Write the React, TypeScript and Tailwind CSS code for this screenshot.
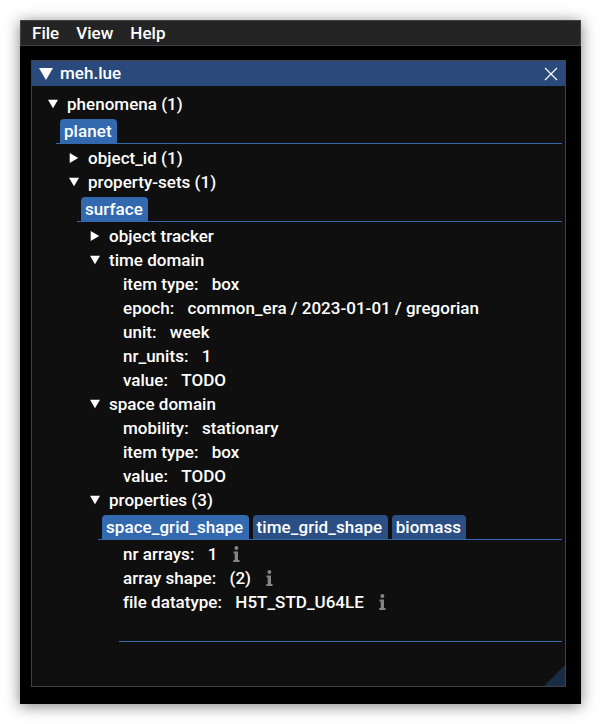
import type { ReactNode } from "react";

function Arrow({ open }: { open: boolean }) {
  return (
    <svg width="12" height="12" viewBox="0 0 12 12" className="shrink-0" fill="#fff">
      {open ? <path d="M1 1.7H11L6 10.2Z" /> : <path d="M1.7 1V11L10.2 6Z" />}
    </svg>
  );
}

function Node({ open = true, label }: { open?: boolean; label: string }) {
  return (
    <div className="flex h-6 items-center gap-2">
      <Arrow open={open} />
      <span>{label}</span>
    </div>
  );
}

function Tabs({ names }: { names: string[] }) {
  return (
    <div className="mt-[3px] mb-[2px] flex h-[25px] gap-1 border-b border-[#3368ad] pl-1 tracking-[0.06px]">
      {names.map((name, i) => (
        <div
          key={name}
          className={`h-6 rounded-t pr-[5.4px] pl-1 leading-[25px] ${i === 0 ? "bg-[#3369ae]" : "bg-[#2b4f84]"}`}
        >
          {name}
        </div>
      ))}
    </div>
  );
}

function InfoIcon() {
  return (
    <svg width="7" height="16" viewBox="0 0 7 16" fill="#858585" className="ml-[2px]">
      <circle cx="3.4" cy="2" r="2" />
      <path d="M0.5 5.5H5V14H6.5V16H0.3V14H1.7V7.5H0.5Z" />
    </svg>
  );
}

function Field({ name, value, info = false }: { name: string; value: string; info?: boolean }) {
  return (
    <div className="flex h-6 items-center gap-[13.3px]">
      <span>{name}:</span>
      <span>{value}</span>
      {info && <InfoIcon />}
    </div>
  );
}

function Indent({ children }: { children: ReactNode }) {
  return <div className="pl-[21px]">{children}</div>;
}

export default function App() {
  return (
    <div className="h-[724px] w-[601px] overflow-hidden bg-white pt-5 pl-5 font-['Roboto',sans-serif] text-[17px] leading-6 font-medium tracking-[0.02px] whitespace-pre text-white">
      <div className="h-[684px] w-[561px] bg-black shadow-[0_2px_14px_rgba(0,0,0,0.5)]">
        <nav className="flex h-[26px] items-center gap-[17px] border border-[#414147] bg-[#242424] pl-[11px]">
          <span>File</span>
          <span>View</span>
          <span>Help</span>
        </nav>
        <section className="mt-[14px] ml-[11px] flex h-[627px] w-[535px] flex-col border border-[#414147] bg-[#0f0f0f]">
          <header className="flex h-[25px] shrink-0 items-center bg-[#294a7a] pr-[7px] pl-[7px]">
            <svg width="14" height="12" viewBox="0 0 14 12" fill="#fff">
              <path d="M0 0H14L7 12Z" />
            </svg>
            <span className="ml-[7px] flex-1 pb-[2px] leading-[22px]">meh.lue</span>
            <svg width="14" height="14" viewBox="0 0 14 14" stroke="#fff" strokeWidth="1.2">
              <path d="M1 1L13 13M13 1L1 13" />
            </svg>
          </header>
          <main className="flex-1 pt-[6px] pr-[3px] pl-[15px]">
            <Node label="phenomena (1)" />
            <div className="pl-[9px]">
              <Tabs names={["planet"]} />
              <div className="pl-[12px]">
                <Node open={false} label="object_id (1)" />
                <Node label="property-sets (1)" />
              </div>
              <Indent>
                <Tabs names={["surface"]} />
                <div className="pl-[12px]">
                  <Node open={false} label="object tracker" />
                  <Node label="time domain" />
                  <div className="pl-[34px]">
                    <Field name="item type" value="box" />
                    <Field name="epoch" value="common_era / 2023-01-01 / gregorian" />
                    <Field name="unit" value="week" />
                    <Field name="nr_units" value="1" />
                    <Field name="value" value="TODO" />
                  </div>
                  <Node label="space domain" />
                  <div className="pl-[34px]">
                    <Field name="mobility" value="stationary" />
                    <Field name="item type" value="box" />
                    <Field name="value" value="TODO" />
                  </div>
                  <Node label="properties (3)" />
                </div>
                <Indent>
                  <Tabs names={["space_grid_shape", "time_grid_shape", "biomass"]} />
                  <div className="pl-[25px]">
                    <Field name="nr arrays" value="1" info />
                    <Field name="array shape" value="(2)" info />
                    <Field name="file datatype" value="H5T_STD_U64LE" info />
                  </div>
                  <hr className="mt-[27px] ml-[21px] border-t border-[#3368ad]" />
                </Indent>
              </Indent>
            </div>
          </main>
          <svg width="21" height="21" viewBox="0 0 21 21" className="shrink-0 self-end" fill="#1a2b45">
            <path d="M21 0V21H0Z" />
          </svg>
        </section>
      </div>
    </div>
  );
}
